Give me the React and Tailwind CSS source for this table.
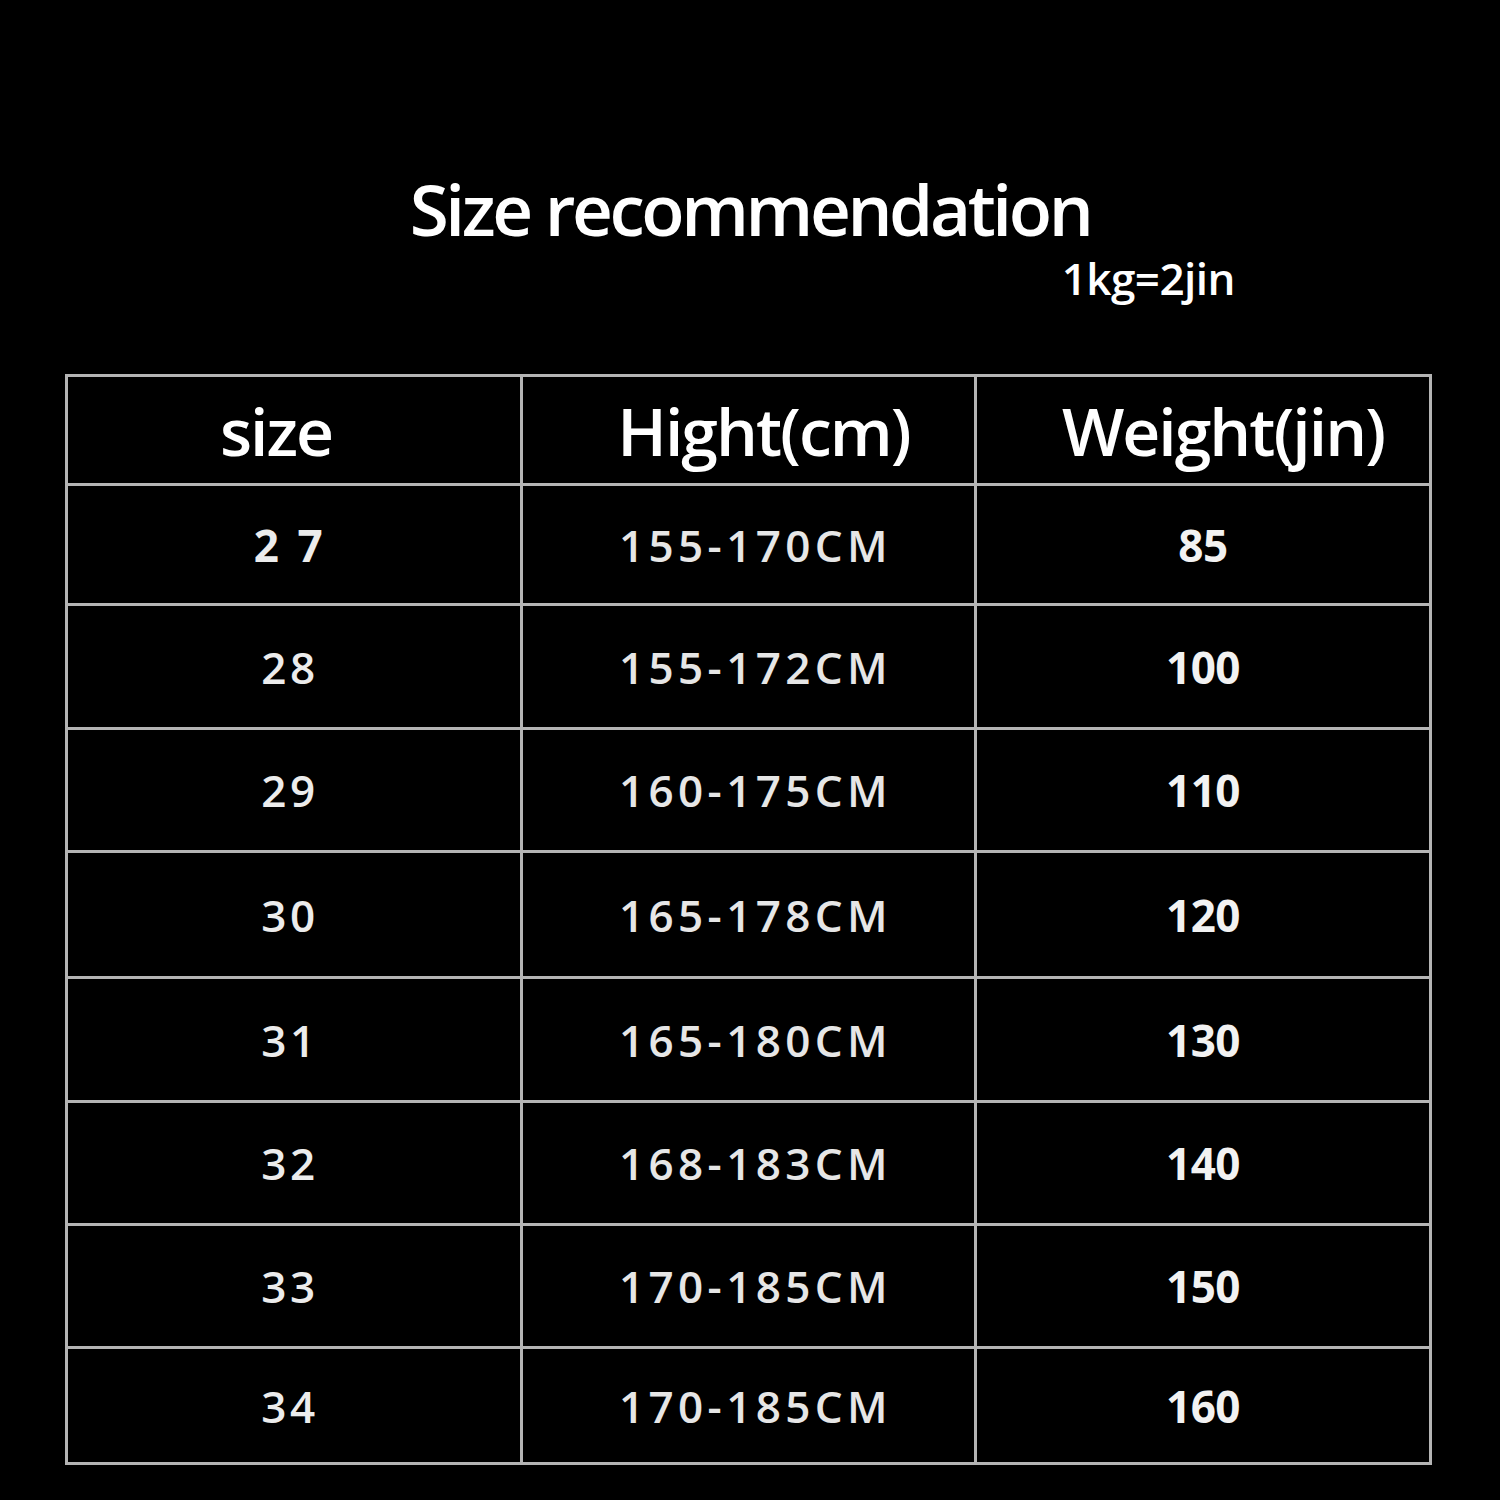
const rows = [
  { size: "2 7", height: "155-170CM", weight: "85", h: "h-[117px]", sizeBold: true },
  { size: "28", height: "155-172CM", weight: "100", h: "h-[121px]" },
  { size: "29", height: "160-175CM", weight: "110", h: "h-[120px]" },
  { size: "30", height: "165-178CM", weight: "120", h: "h-[123px]" },
  { size: "31", height: "165-180CM", weight: "130", h: "h-[121px]" },
  { size: "32", height: "168-183CM", weight: "140", h: "h-[120px]" },
  { size: "33", height: "170-185CM", weight: "150", h: "h-[120px]" },
  { size: "34", height: "170-185CM", weight: "160", h: "h-[113px]" },
]

const font = { fontFamily: '"Open Sans", "Noto Sans", sans-serif' }

export default function App() {
  return (
    <div className="w-[1500px] h-[1500px] bg-black text-white" style={font}>
      <div className="pt-[164px] flex flex-col items-center">
        <h1 className="text-[71px] leading-[90px] font-semibold tracking-[-0.048em] text-center">
          Size recommendation
        </h1>
        <div className="w-full flex justify-end pr-[265px] mt-[-4px]">
          <span className="text-[44px] leading-[56px] font-semibold tracking-[-0.012em]">1kg=2jin</span>
        </div>
      </div>

      <div className="ml-[65px] mt-[68px] w-[1367px] grid grid-cols-[452px_451px_452px] gap-[3px] p-[3px] bg-[#b4b4b4]">
        <div className="h-[106px] bg-black flex items-center justify-center pr-[36px]">
          <span className="text-[66px] font-semibold tracking-[-0.03em]">size</span>
        </div>
        <div className="h-[106px] bg-black flex items-center justify-center pl-[30px]">
          <span className="text-[66px] font-semibold tracking-[-0.03em]">Hight(cm)</span>
        </div>
        <div className="h-[106px] bg-black flex items-center justify-center pl-[40px]">
          <span className="text-[66px] font-semibold tracking-[-0.03em]">Weight(jin)</span>
        </div>

        {rows.map((r) => (
          <div key={r.size} className="contents">
            <div className={`${r.h} bg-black flex items-center justify-center pr-[8px]`}>
              <span
                className={`text-[44px] text-[#ececec] tracking-[0.08em] ${r.sizeBold ? "font-bold" : "font-semibold"}`}
              >
                {r.size}
              </span>
            </div>
            <div className={`${r.h} bg-black flex items-center justify-center pl-[14px]`}>
              <span className="text-[44px] font-semibold text-[#e6e6e6] tracking-[0.1em]">{r.height}</span>
            </div>
            <div className={`${r.h} bg-black flex items-center justify-center`}>
              <span className="text-[44px] font-bold text-[#f2f2f2] tracking-[-0.01em]">{r.weight}</span>
            </div>
          </div>
        ))}
      </div>
    </div>
  )
}
